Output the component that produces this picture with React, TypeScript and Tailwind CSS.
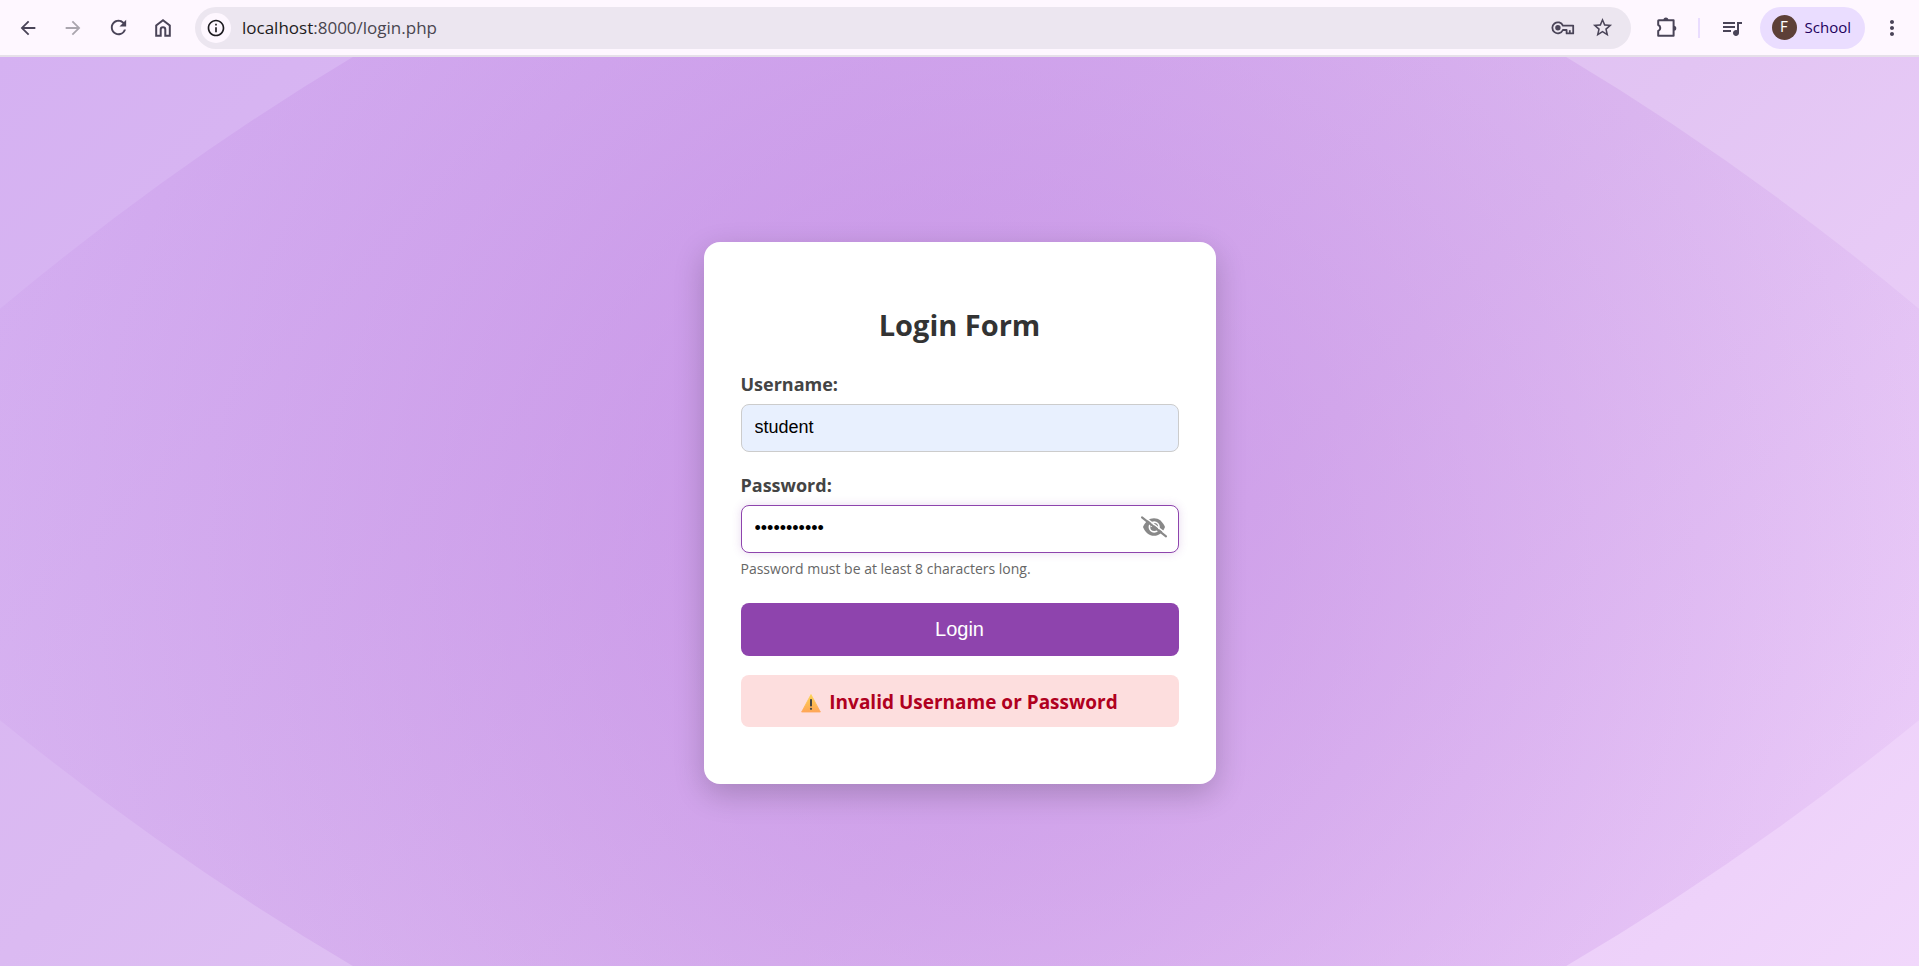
import { useState } from 'react';
import {
  MdArrowBack,
  MdArrowForward,
  MdRefresh,
  MdInfoOutline,
  MdStarBorder,
  MdQueueMusic,
  MdMoreVert,
} from 'react-icons/md';

function HomeIcon() {
  return (
    <svg width="24" height="24" viewBox="0 0 24 24" fill="none" stroke="currentColor" strokeWidth="2" aria-hidden="true">
      <path d="M5.2 19.7 V9.4 L12 4.2 L18.8 9.4 V19.7 H14.3 V13.6 A2.3 2.3 0 0 0 9.7 13.6 V19.7 Z" />
    </svg>
  );
}

function KeyIcon() {
  return (
    <svg width="24" height="24" viewBox="0 0 24 24" fill="none" stroke="currentColor" strokeWidth="1.8" aria-hidden="true">
      <path d="M11.9 9.6 A5.5 5.5 0 1 0 11.9 14 H15.6 V17.4 H22.2 V9.6 Z" strokeLinejoin="round" />
      <path d="M18.8 17 V14.2" />
      <circle cx="6.9" cy="11.8" r="2.7" fill="currentColor" stroke="none" />
    </svg>
  );
}

function PuzzleIcon() {
  return (
    <svg width="24" height="24" viewBox="0 0 24 24" aria-hidden="true">
      <path
        d="M4.8 4.2 H19.6 V19.8 H4.2 V15 A3.2 3.2 0 0 0 4.2 9 V4.8 A0.6 0.6 0 0 1 4.8 4.2 Z"
        fill="none"
        stroke="currentColor"
        strokeWidth="2"
        strokeLinejoin="round"
      />
      <path d="M9.4 4 A2.5 2.5 0 0 1 14.4 4 Z M19.8 9.8 A2.5 2.5 0 0 1 19.8 14.8 Z" fill="currentColor" />
    </svg>
  );
}

function EyeSlashIcon() {
  return (
    <svg width="28" height="24" viewBox="0 0 28 24" fill="none" aria-hidden="true">
      <path
        d="M3 12 C5.2 6.6 9.2 3.2 14 3.2 S22.8 6.6 25 12 C22.8 17.4 18.8 20.8 14 20.8 S5.2 17.4 3 12 Z"
        fill="currentColor"
      />
      <circle cx="14.2" cy="12" r="4.8" stroke="#fff" strokeWidth="1.7" />
      <path d="M14.2 8.6 L14.2 12 L10.6 12 A3.6 3.6 0 0 1 14.2 8.6 Z" fill="#fff" />
      <path d="M3.2 0.8 L27 19.4" stroke="#fff" strokeWidth="1.4" />
      <path d="M2 2.4 L26 21.4" stroke="currentColor" strokeWidth="2.1" strokeLinecap="round" />
    </svg>
  );
}

function WarningIcon() {
  return (
    <svg width="20" height="20" viewBox="0 0 20 20" aria-hidden="true">
      <defs>
        <linearGradient id="warning" x1="0" y1="0" x2="0" y2="1">
          <stop offset="0" stopColor="#fcd354" />
          <stop offset="1" stopColor="#ffa657" />
        </linearGradient>
      </defs>
      <path d="M10 1.5 L19.4 19 H0.6 Z" fill="url(#warning)" stroke="url(#warning)" strokeWidth="0.8" strokeLinejoin="round" />
      <rect x="9" y="6" width="2" height="7.5" rx="0.8" fill="#454545" />
      <circle cx="10" cy="15.8" r="1.1" fill="#454545" />
    </svg>
  );
}

function BrowserBar() {
  return (
    <header className="flex h-[57px] shrink-0 items-center border-b-2 border-[#e6e0e9] bg-[#fef7ff] pr-[15px] pl-4 text-[#4a4458]">
      <nav aria-label="Browser navigation" className="flex items-center gap-[21px]">
        <button type="button" aria-label="Back" className="flex size-6 items-center justify-center">
          <MdArrowBack size={22} />
        </button>
        <button type="button" aria-label="Forward" className="flex size-6 items-center justify-center text-[#aaa5ae]">
          <MdArrowForward size={22} />
        </button>
        <button type="button" aria-label="Reload" className="flex size-6 items-center justify-center">
          <MdRefresh size={23} />
        </button>
        <button type="button" aria-label="Home" className="flex size-6 items-center justify-center">
          <HomeIcon />
        </button>
      </nav>
      <div className="ml-5 flex h-[42px] flex-1 items-center rounded-full bg-[#ece6f0] pr-4 pl-1.5">
        <button
          type="button"
          aria-label="Site information"
          className="flex size-[30px] items-center justify-center rounded-full bg-[#fef7ff] text-[#1d1b20]"
        >
          <MdInfoOutline size={20} />
        </button>
        <span className="ml-[11px] flex-1 text-[17px] text-[#49454f]">
          <span className="text-[#1d1b20]">localhost</span>:8000/login.php
        </span>
        <button type="button" aria-label="Passwords" className="flex size-6 items-center justify-center">
          <KeyIcon />
        </button>
        <button type="button" aria-label="Bookmark" className="ml-4 flex size-6 items-center justify-center">
          <MdStarBorder size={23} />
        </button>
      </div>
      <button type="button" aria-label="Extensions" className="ml-[23px] flex size-6 items-center justify-center">
        <PuzzleIcon />
      </button>
      <span className="mx-5 h-5 w-0.5 bg-[#eaddff]" />
      <button type="button" aria-label="Media controls" className="flex size-6 items-center justify-center">
        <MdQueueMusic size={24} />
      </button>
      <button
        type="button"
        className="ml-4 flex h-[42px] items-center gap-2 rounded-full bg-[#eaddff] pr-3.5 pl-3 text-[#21005d]"
      >
        <span className="flex size-[25px] items-center justify-center rounded-full bg-[#5d4037] font-['Roboto',sans-serif] text-[14px] text-white">
          F
        </span>
        <span className="text-[15px]">School</span>
      </button>
      <button type="button" aria-label="Menu" className="ml-[15px] flex size-6 items-center justify-center">
        <MdMoreVert size={24} />
      </button>
    </header>
  );
}

function Backdrop() {
  return (
    <svg
      className="absolute inset-0 size-full"
      viewBox="0 0 1920 910"
      preserveAspectRatio="none"
      aria-hidden="true"
    >
      <defs>
        <radialGradient id="glow" gradientUnits="userSpaceOnUse" cx="960" cy="455" r="1172">
          <stop offset="0" stopColor="#b066da" stopOpacity="0.48" />
          <stop offset="1" stopColor="#b066da" stopOpacity="0" />
        </radialGradient>
      </defs>
      <path
        d="M0 252 Q174 107 353 0 H1567 Q1746 107 1920 252 V664 Q1746 805 1567 910 H353 Q174 805 0 664 Z"
        fill="url(#glow)"
      />
    </svg>
  );
}

function LoginCard() {
  const [username, setUsername] = useState('student');
  const [password, setPassword] = useState('password123');
  const [visible, setVisible] = useState(false);

  return (
    <form
      onSubmit={(event) => event.preventDefault()}
      className="relative flex w-[512px] max-w-full flex-col rounded-2xl bg-white px-[37px] pt-[62px] pb-[57px] shadow-[0_10px_31px_rgba(0,0,0,0.2)]"
    >
      <h1 className="text-center text-[29px] leading-[42px] font-bold text-[#333]">Login Form</h1>

      <label htmlFor="username" className="mt-6 text-[18px] leading-7 font-bold text-[#444]">
        Username:
      </label>
      <input
        id="username"
        type="text"
        value={username}
        onChange={(event) => setUsername(event.target.value)}
        className="mt-1.5 h-12 rounded-lg border border-[#ccc] bg-[#e8f0fe] px-[13px] font-['Liberation_Sans',Arial,sans-serif] text-[18px] text-black outline-none"
      />

      <label htmlFor="password" className="mt-[19px] text-[18px] leading-7 font-bold text-[#444]">
        Password:
      </label>
      <div className="relative mt-1.5">
        <input
          id="password"
          type={visible ? 'text' : 'password'}
          value={password}
          onChange={(event) => setPassword(event.target.value)}
          className="block h-12 w-full rounded-lg border border-[#8e44ad] bg-white pr-12 pl-[13px] font-['Liberation_Sans',Arial,sans-serif] text-[18px] text-black shadow-[0_0_10px_rgba(142,68,173,0.2)] outline-none"
        />
        <button
          type="button"
          aria-label="Toggle password visibility"
          onClick={() => setVisible(!visible)}
          className="absolute top-2 right-[11px] flex size-7 items-center justify-center text-[#888]"
        >
          <EyeSlashIcon />
        </button>
      </div>
      <p className="mt-1.5 text-[14px] leading-5 text-[#666]">Password must be at least 8 characters long.</p>

      <button
        type="submit"
        className="mt-6 h-[53px] rounded-lg bg-[#8e44ad] font-['Liberation_Sans',Arial,sans-serif] text-[20px] text-white"
      >
        Login
      </button>

      <div
        role="alert"
        className="mt-[19px] flex h-[52px] items-center justify-center gap-2 rounded-lg bg-[#fddede] pt-1 text-[19px] font-bold text-[#b00020]"
      >
        <WarningIcon />
        Invalid Username or Password
      </div>
    </form>
  );
}

export default function App() {
  return (
    <div className="flex min-h-screen flex-col font-['Open_Sans','Noto_Sans',sans-serif]">
      <BrowserBar />
      <main className="relative flex flex-1 items-center justify-center overflow-hidden bg-[linear-gradient(135deg,#d5b1f2_0%,#dbbaf2_32%,#e2c4f3_60%,#eed2fa_90%,#f1d8fb_100%)] pt-0.5">
        <Backdrop />
        <LoginCard />
      </main>
    </div>
  );
}
